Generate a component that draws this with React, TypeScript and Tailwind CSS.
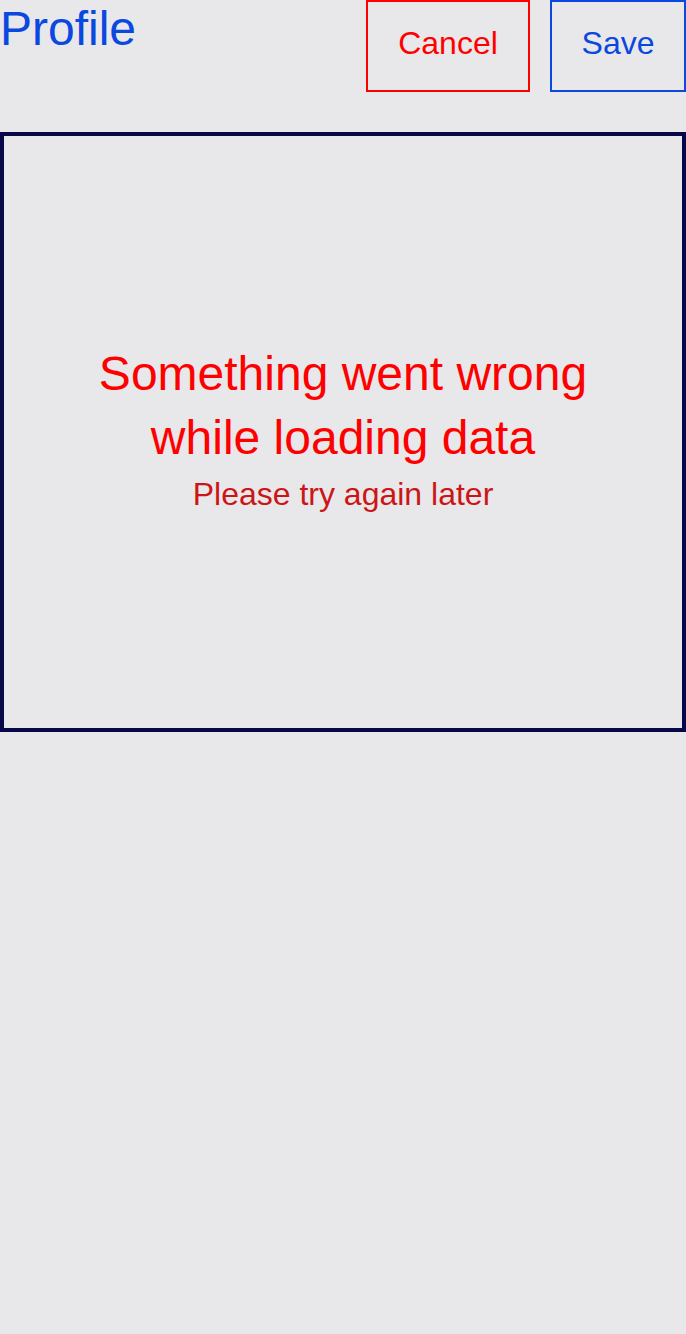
import React from 'react';

const font = { fontFamily: '"Liberation Sans", Arial, sans-serif' };

export default function App() {
  return (
    <div style={font} className="min-h-[1334px] w-full bg-[#e8e7ea]">
      {/* Header */}
      <div className="flex items-start justify-between">
        <h1 className="text-[48px] leading-[57px] text-[#0a48e0]">Profile</h1>
        <div className="flex gap-[20px]">
          <button className="flex h-[92px] w-[164px] items-start justify-center border-2 border-[#ff0000] pt-[23px] text-[32px] leading-[37px] text-[#ff0000]">
            Cancel
          </button>
          <button className="flex h-[92px] w-[136px] items-start justify-center border-2 border-[#0a48e0] pt-[23px] text-[32px] leading-[37px] text-[#0a48e0]">
            Save
          </button>
        </div>
      </div>

      {/* Error box */}
      <div className="mt-[40px] flex h-[600px] flex-col items-center justify-center border-4 border-[#07074a] pb-[4px] text-center">
        <p className="w-[500px] text-[48px] leading-[64px] text-[#ff0000]">Something went wrong while loading data</p>
        <p className="text-[32px] leading-[48px] text-[#cc1616]">Please try again later</p>
      </div>
    </div>
  );
}
